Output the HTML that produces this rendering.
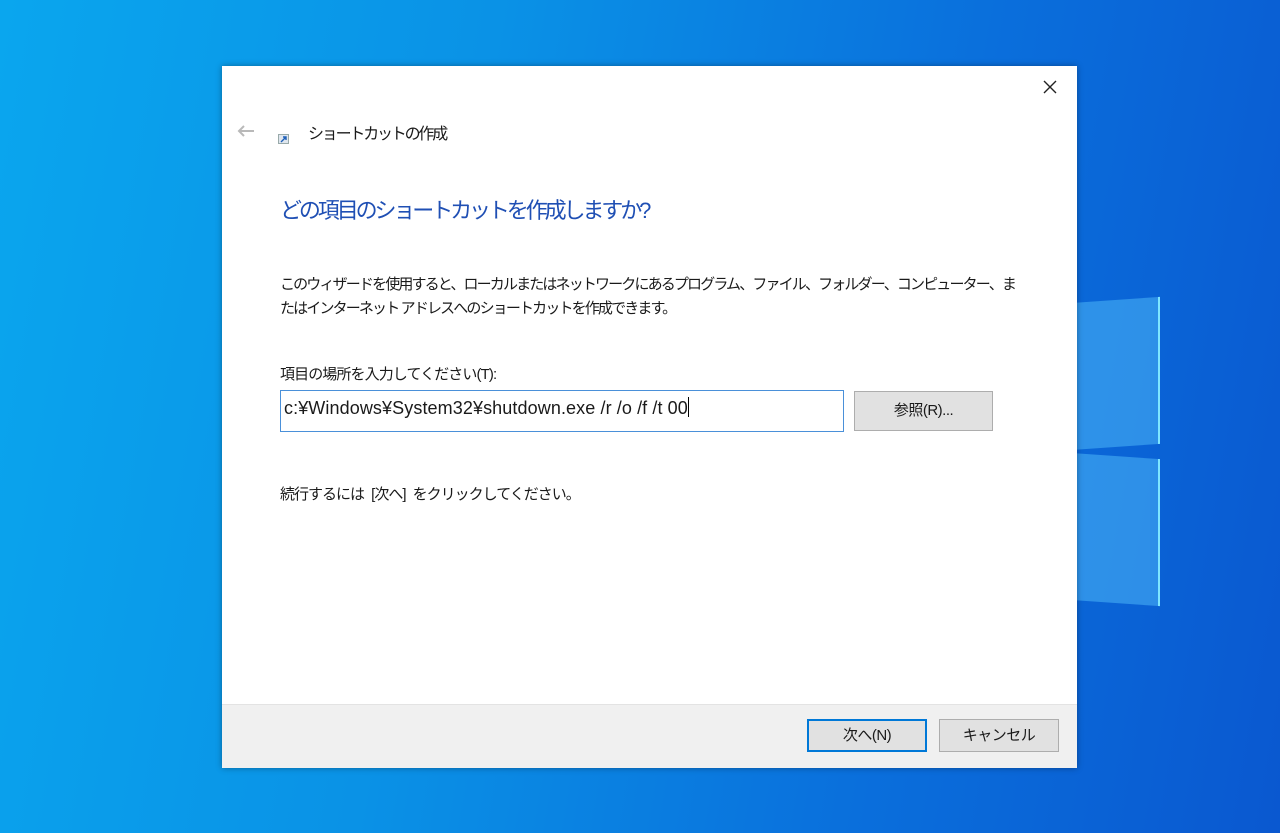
<!DOCTYPE html>
<html><head><meta charset="utf-8"><style>
body{margin:0;width:1280px;height:833px;overflow:hidden;position:relative;
background:linear-gradient(100deg,#0aa6ee 0%,#0a92e6 35%,#0a6fdc 70%,#0a58d0 100%);
font-family:"Liberation Sans","Noto Sans CJK JP",sans-serif;color:#1a1a1a}
.pane{position:absolute;background:rgba(90,200,255,0.45);border-right:2px solid #7fe6ff}
.dlg{position:absolute;left:222px;top:66px;width:855px;height:702px;background:#fff;box-shadow:0 0 6px rgba(0,0,0,.35)}
.foot{position:absolute;left:0;right:0;bottom:0;height:63px;background:#f0f0f0;border-top:1px solid #e3e3e3}
.t{position:absolute;white-space:nowrap}
.btn{position:absolute;background:#e1e1e1;border:1px solid #adadad;box-sizing:border-box;text-align:center;font-size:15px;letter-spacing:-0.5px}
</style></head><body>
<div class="pane" style="left:1070px;top:300px;width:88px;height:147px;transform:skewY(-4deg)"></div>
<div class="pane" style="left:1070px;top:456px;width:88px;height:147px;transform:skewY(4deg)"></div>
<div class="dlg">
 <svg style="position:absolute;left:820px;top:13px" width="16" height="16" viewBox="0 0 16 16"><path d="M2 2L14 14M14 2L2 14" stroke="#222" stroke-width="1.4"/></svg>
 <svg style="position:absolute;left:14px;top:57px" width="20" height="16" viewBox="0 0 20 16"><path d="M18 8H3M8 3L3 8L8 13" stroke="#b9b9b9" stroke-width="2" fill="none"/></svg>
 <div style="position:absolute;left:56px;top:68px;width:9px;height:8px;background:#dfe6ee;border:1px solid #9aa"><svg width="9" height="8" viewBox="0 0 9 8" style="display:block"><path d="M2 7L7 2M4 2H7V5" stroke="#1d5fb8" stroke-width="1.4" fill="none"/></svg></div>
 <div class="t" style="left:86px;top:54px;font-size:16px;letter-spacing:-2.2px">ショートカットの作成</div>
 <div class="t" style="left:58px;top:127px;font-size:22px;letter-spacing:-3.1px;color:#1f4fb4">どの項目のショートカットを作成しますか?</div>
 <div class="t" style="left:58px;top:207px;font-size:15px;letter-spacing:-1.85px;line-height:24px">このウィザードを使用すると、ローカルまたはネットワークにあるプログラム、ファイル、フォルダー、コンピューター、ま<br>たはインターネット アドレスへのショートカットを作成できます。</div>
 <div class="t" style="left:58px;top:297px;font-size:15px;letter-spacing:-0.9px">項目の場所を入力してください(T):</div>
 <div style="position:absolute;left:58px;top:324px;width:564px;height:42px;border:1px solid #4a90d9;box-sizing:border-box"></div>
 <div class="t" style="left:62px;top:331px;font-size:18px;letter-spacing:0.1px">c:¥Windows¥System32¥shutdown.exe /r /o /f /t 00<span style="display:inline-block;width:1px;height:20px;background:#000;vertical-align:-3px"></span></div>
 <div class="btn" style="left:632px;top:325px;width:139px;height:40px;line-height:38px">参照(R)...</div>
 <div class="t" style="left:58px;top:417px;font-size:15px;letter-spacing:-1px;word-spacing:4px">続行するには [次へ] をクリックしてください。</div>
 <div class="foot">
  <div class="btn" style="left:585px;top:14px;width:120px;height:33px;line-height:31px;border:1px solid #0078d7;box-shadow:inset 0 0 0 1px #0078d7">次へ(N)</div>
  <div class="btn" style="left:717px;top:14px;width:120px;height:33px;line-height:31px">キャンセル</div>
 </div>
</div>
</body></html>
